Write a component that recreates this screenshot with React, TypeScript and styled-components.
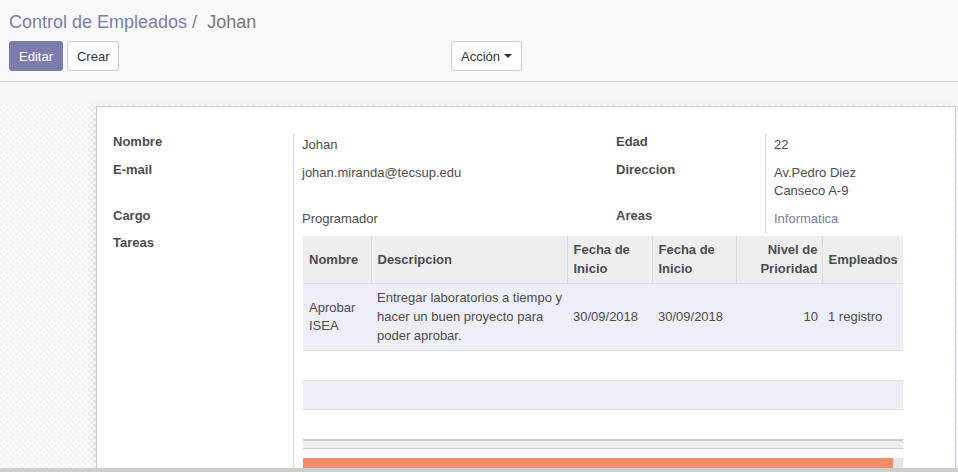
import React from "react";
import styled, { createGlobalStyle } from "styled-components";

const primary = "#7c7bad";
const textColor = "#4c4c4c";

const GlobalStyle = createGlobalStyle`
  html, body {
    margin: 0;
    padding: 0;
    background: #ffffff;
  }
  body {
    font-family: "Liberation Sans", Arial, Helvetica, sans-serif;
    font-size: 13px;
    line-height: 18.57px;
    color: ${textColor};
  }
  * {
    box-sizing: border-box;
  }
`;

const Page = styled.div`
  height: 100vh;
  display: flex;
  flex-direction: column;
  overflow: hidden;
`;

const ControlPanel = styled.div`
  flex: none;
  background: #f9f9f9;
  border-bottom: 1px solid #cfcfcf;
  padding: 9px 9px 10px 9px;
`;

const Breadcrumb = styled.ol`
  display: flex;
  margin: 0;
  padding: 0;
  list-style: none;
  font-size: 18px;
  line-height: 26px;
`;

const Crumb = styled.li<{ $active?: boolean }>`
  color: ${({ $active }) => ($active ? "#777777" : primary)};

  &:not(:first-child)::before {
    content: "/";
    color: ${primary};
    padding: 0 10px 0 5px;
  }
`;

const ButtonRow = styled.div`
  display: grid;
  grid-template-columns: 442px auto;
  margin-top: 6px;
`;

const ButtonGroup = styled.div`
  display: flex;
  gap: 4px;
`;

const Button = styled.button<{ $primary?: boolean }>`
  height: 30px;
  padding: 0 9px;
  border-radius: 3px;
  font-family: inherit;
  font-size: 13px;
  cursor: pointer;
  border: 1px solid ${({ $primary }) => ($primary ? primary : "#cccccc")};
  background: ${({ $primary }) => ($primary ? primary : "#ffffff")};
  color: ${({ $primary }) => ($primary ? "#ffffff" : "#333333")};
  display: inline-flex;
  align-items: center;
  gap: 4px;
`;

const Caret = styled.span`
  display: inline-block;
  width: 0;
  height: 0;
  border-top: 4px solid #333333;
  border-left: 4px solid transparent;
  border-right: 4px solid transparent;
`;

const FormBg = styled.div`
  flex: 1;
  min-height: 0;
  overflow: hidden;
  padding: 24px 2px 0 96px;
  background:
    linear-gradient(#f7f7f7, #f4f4f4) top left / 100% 22px no-repeat,
    repeating-conic-gradient(#f1f1f1 0 25%, #ffffff 0 50%) 0 0 / 6px 6px;
`;

const Sheet = styled.div`
  background: #ffffff;
  border: 1px solid #c9c9d6;
  box-shadow: -4px 0 10px -4px rgba(0, 0, 0, 0.12);
  padding: 26px 51px 0 16px;
  min-height: 100%;
`;

const FieldGrid = styled.div`
  display: grid;
  grid-template-columns: 181px 322px 150px 137px;
  align-items: stretch;
`;

const Label = styled.div`
  font-weight: bold;
  border-right: 1px solid #dddddd;
`;

const Value = styled.div`
  padding: 3px 0 6px 8px;
`;

const Link = styled.a`
  color: ${primary};
  text-decoration: none;
`;

const TaskCell = styled.div`
  grid-column: span 3;
  padding: 2px 0 0 9px;
`;

const Table = styled.table`
  width: 100%;
  border-collapse: collapse;
  table-layout: fixed;
`;

const Th = styled.th<{ $right?: boolean }>`
  background: #eeeeee;
  font-weight: bold;
  text-align: ${({ $right }) => ($right ? "right" : "left")};
  vertical-align: middle;
  padding: 5px 4px 5px 6px;
  border-bottom: 1px solid #dddddd;

  &:not(:first-child) {
    border-left: 1px solid #dddddd;
  }
`;

const Row = styled.tr<{ $striped?: boolean }>`
  background: ${({ $striped }) => ($striped ? "#eeeef6" : "#ffffff")};
  border-bottom: 1px solid #dddddd;
`;

const Td = styled.td<{ $right?: boolean }>`
  text-align: ${({ $right }) => ($right ? "right" : "left")};
  vertical-align: middle;
  padding: 5px 4px 5px 6px;
`;

const FootCell = styled.td`
  height: 9px;
  padding: 0;
  background: #eeeeee;
  border-top: 2px solid #cccccc;
  border-bottom: 1px solid #cccccc;
`;

const Progress = styled.div`
  margin-top: 9px;
  height: 10px;
  background: #e6e6e6;
`;

const ProgressFill = styled.div`
  height: 100%;
  background: #f08d69;
`;

const BottomBar = styled.div`
  flex: none;
  height: 4px;
  background: #cdcdcd;
`;

const columns = [
  { title: "Nombre", width: 68 },
  { title: "Descripcion", width: 196 },
  { title: "Fecha de Inicio", width: 85 },
  { title: "Fecha de Inicio", width: 84 },
  { title: "Nivel de Prioridad", width: 86, right: true },
  { title: "Empleados", width: 81 },
];

const tasks = [
  {
    nombre: "Aprobar ISEA",
    descripcion: "Entregar laboratorios a tiempo y hacer un buen proyecto para poder aprobar.",
    inicio: "30/09/2018",
    fin: "30/09/2018",
    prioridad: 10,
    empleados: "1 registro",
  },
];

const App = () => {
  const emptyRows = 3;

  return (
    <>
      <GlobalStyle />
      <Page>
        <ControlPanel>
          <Breadcrumb>
            <Crumb>Control de Empleados</Crumb>
            <Crumb $active>Johan</Crumb>
          </Breadcrumb>
          <ButtonRow>
            <ButtonGroup>
              <Button $primary>Editar</Button>
              <Button>Crear</Button>
            </ButtonGroup>
            <ButtonGroup>
              <Button>
                Acción <Caret />
              </Button>
            </ButtonGroup>
          </ButtonRow>
        </ControlPanel>

        <FormBg>
          <Sheet>
            <FieldGrid>
              <Label>Nombre</Label>
              <Value>Johan</Value>
              <Label>Edad</Label>
              <Value>22</Value>

              <Label>E-mail</Label>
              <Value>johan.miranda@tecsup.edu</Value>
              <Label>Direccion</Label>
              <Value>Av.Pedro Diez Canseco A-9</Value>

              <Label>Cargo</Label>
              <Value>Programador</Value>
              <Label>Areas</Label>
              <Value>
                <Link href="#">Informatica</Link>
              </Value>

              <Label>Tareas</Label>
              <TaskCell>
                <Table>
                  <colgroup>
                    {columns.map((c, i) => (
                      <col key={i} style={{ width: c.width }} />
                    ))}
                  </colgroup>
                  <thead>
                    <tr>
                      {columns.map((c, i) => (
                        <Th key={i} $right={c.right}>
                          {c.title}
                        </Th>
                      ))}
                    </tr>
                  </thead>
                  <tbody>
                    {tasks.map((t, i) => (
                      <Row key={i} $striped>
                        <Td>{t.nombre}</Td>
                        <Td>{t.descripcion}</Td>
                        <Td>{t.inicio}</Td>
                        <Td>{t.fin}</Td>
                        <Td $right>{t.prioridad}</Td>
                        <Td>{t.empleados}</Td>
                      </Row>
                    ))}
                    {Array.from({ length: emptyRows }).map((_, i) => (
                      <Row key={`empty-${i}`} $striped={(tasks.length + i) % 2 === 0}>
                        <Td colSpan={columns.length}>&nbsp;</Td>
                      </Row>
                    ))}
                  </tbody>
                  <tfoot>
                    <tr>
                      <FootCell colSpan={columns.length} />
                    </tr>
                  </tfoot>
                </Table>
                <Progress>
                  <ProgressFill style={{ width: "98.3%" }} />
                </Progress>
              </TaskCell>
            </FieldGrid>
          </Sheet>
        </FormBg>
        <BottomBar />
      </Page>
    </>
  );
};

export default App;
